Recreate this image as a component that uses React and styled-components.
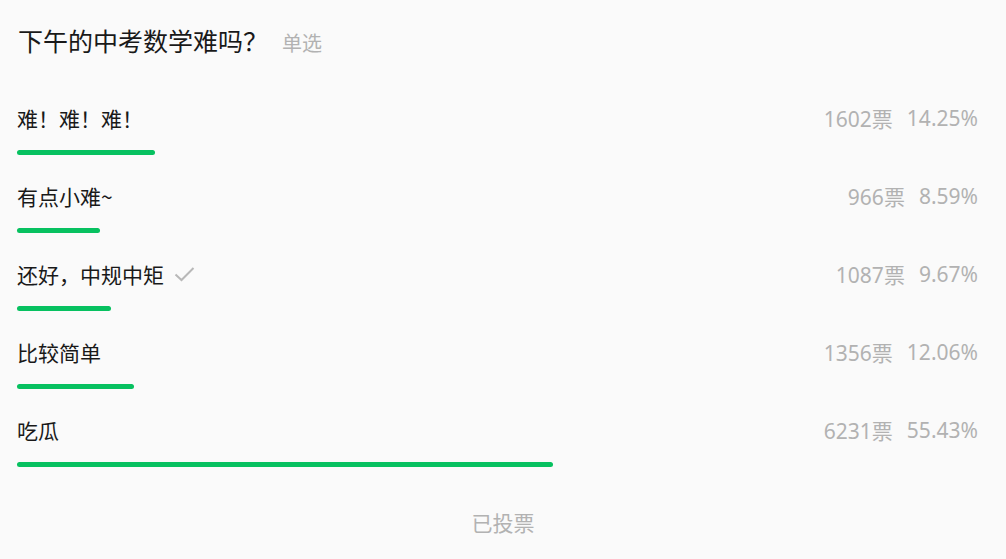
import React from "react";
import styled, { createGlobalStyle } from "styled-components";

const Global = createGlobalStyle`
  html, body { margin: 0; padding: 0; background: #fafafa; }
  body { font-family: "Noto Sans", "Noto Sans CJK SC", sans-serif; }
`;

const Page = styled.div`
  padding: 22px 22px 0 17px;
  background: #fafafa;
  min-height: 559px;
  box-sizing: border-box;
`;

const TitleRow = styled.div`
  display: flex;
  align-items: baseline;
  padding-left: 1px;
  height: 36px;
  line-height: 36px;
`;

const Title = styled.h1`
  margin: 0;
  font-size: 25px;
  font-weight: 400;
  color: #191919;
  font-family: "Noto Sans CJK SC", sans-serif;
`;

const Tag = styled.span`
  margin-left: 14px;
  font-size: 20px;
  color: #b2b2b2;
  font-family: "Noto Sans CJK SC", sans-serif;
`;

const List = styled.div`
  margin-top: 45px;
  display: flex;
  flex-direction: column;
  gap: 26px;
`;

const Option = styled.div`
  display: flex;
  flex-direction: column;
`;

const OptionHead = styled.div`
  display: flex;
  align-items: center;
  justify-content: space-between;
  height: 30px;
  padding-right: 6px;
`;

const Label = styled.span`
  display: flex;
  align-items: center;
  font-size: 21px;
  color: #191919;
  font-family: "Noto Sans CJK SC", sans-serif;
`;

const Check = styled.svg`
  margin-left: 10px;
  width: 21px;
  height: 16px;
`;

const Stats = styled.span`
  display: flex;
  align-items: center;
  gap: 14px;
  font-size: 21px;
  color: #b2b2b2;
  font-family: "Noto Sans", "Noto Sans CJK SC", sans-serif;
`;

const Track = styled.div`
  margin-top: 17px;
  height: 5px;
`;

const Bar = styled.div`
  height: 5px;
  border-radius: 3px;
  background: #07c160;
`;

const Footer = styled.div`
  margin-top: 40px;
  margin-left: -17px;
  margin-right: -22px;
  text-align: center;
  line-height: 30px;
  font-size: 21px;
  color: #b2b2b2;
  font-family: "Noto Sans CJK SC", sans-serif;
`;

const options = [
  { label: "难！难！难！", votes: 1602, pct: 14.25 },
  { label: "有点小难~", votes: 966, pct: 8.59 },
  { label: "还好，中规中矩", votes: 1087, pct: 9.67, checked: true },
  { label: "比较简单", votes: 1356, pct: 12.06 },
  { label: "吃瓜", votes: 6231, pct: 55.43 },
];

export default function App() {
  return (
    <>
      <Global />
      <Page>
        <TitleRow>
          <Title>下午的中考数学难吗？</Title>
          <Tag>单选</Tag>
        </TitleRow>
        <List>
          {options.map((o) => (
            <Option key={o.label}>
              <OptionHead>
                <Label>
                  {o.label}
                  {o.checked && (
                    <Check viewBox="0 0 21 16">
                      <path d="M1.5 8.5 L7.5 14 L19.5 2" fill="none" stroke="#b8b8b8" strokeWidth="2" />
                    </Check>
                  )}
                </Label>
                <Stats>
                  <span>{o.votes}票</span>
                  <span>{o.pct.toFixed(2)}%</span>
                </Stats>
              </OptionHead>
              <Track>
                <Bar style={{ width: `${o.pct}%` }} />
              </Track>
            </Option>
          ))}
        </List>
        <Footer>已投票</Footer>
      </Page>
    </>
  );
}
